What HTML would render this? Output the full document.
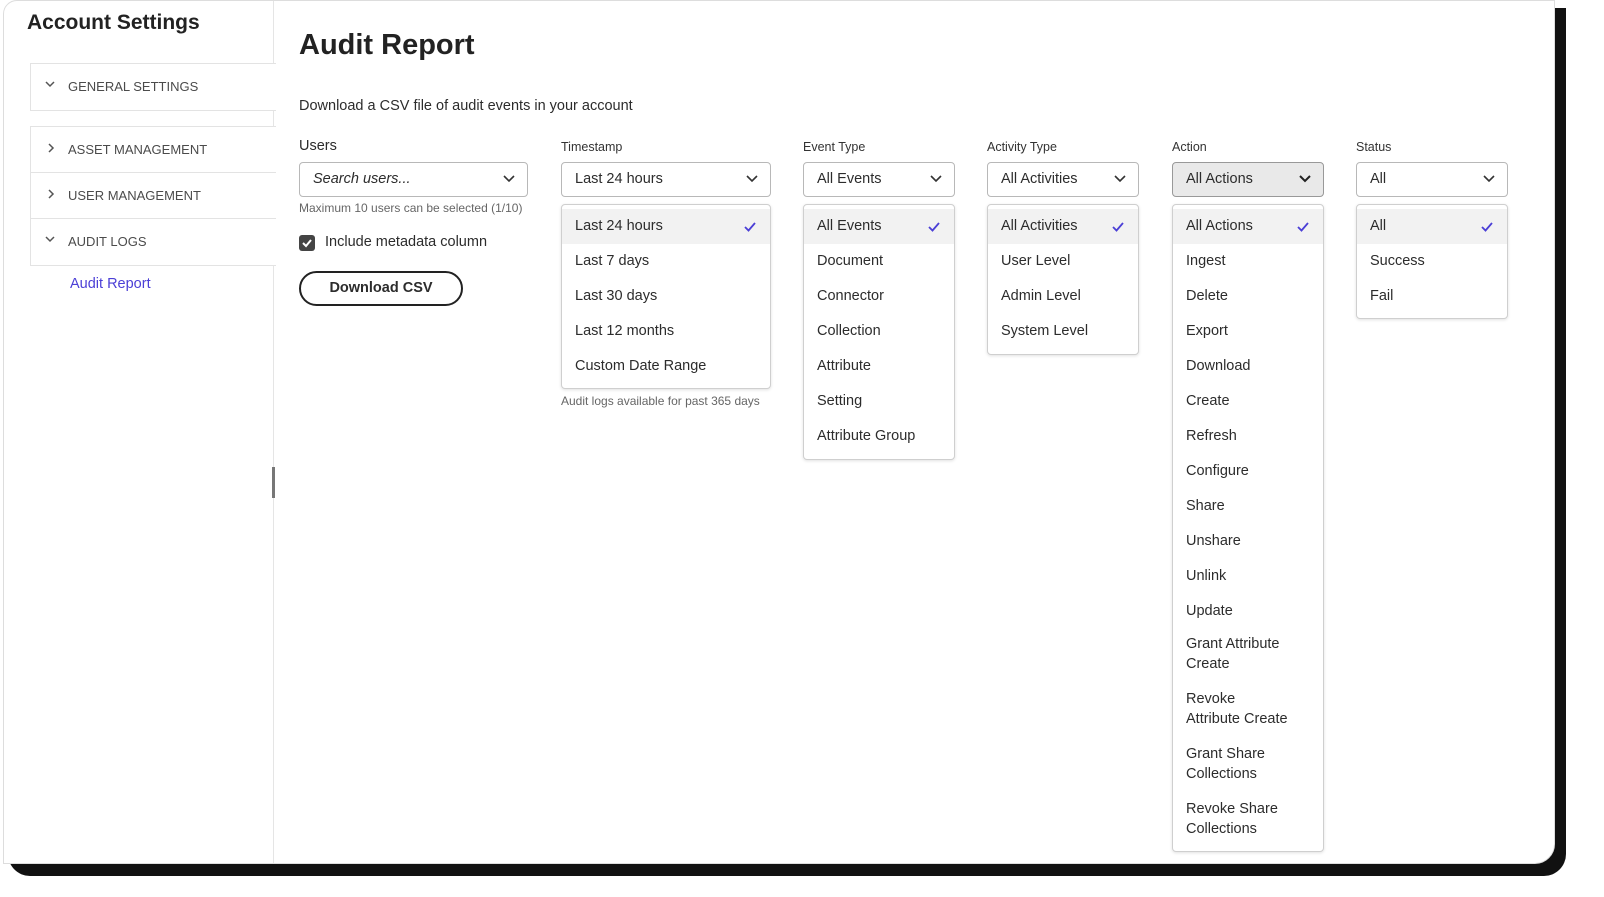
<!DOCTYPE html>
<html><head><meta charset="utf-8"><style>
*{box-sizing:border-box;margin:0;padding:0}
body{width:1604px;height:897px;background:#fff;font-family:"Liberation Sans",sans-serif;color:#2c2c2c;position:relative;overflow:hidden}
.shadow{position:absolute;left:8px;top:8px;width:1558px;height:868px;background:#111;border-radius:0 0 22px 22px}
.card{position:absolute;left:3px;top:0;width:1552px;height:864px;background:#fff;border:1px solid #ddd;border-radius:14px 0 20px 0;overflow:hidden}
.a{position:absolute}
.side{position:absolute;left:26px;width:246px;border:1px solid #e3e3e3;border-right:none;background:#fff;font-size:13px;color:#4b4b4b;text-transform:uppercase}
.side div{height:46px;line-height:46px;padding-left:37px;position:relative;border-bottom:1px solid #e3e3e3}
.side div:last-child{border-bottom:none}
.side svg{position:absolute;left:14px;top:17px}
.lbl{font-size:12.5px;color:#333}
.btn{position:absolute;top:161px;height:35px;border:1px solid #b8b8b8;border-radius:4px;font-size:14.5px;line-height:33px;padding-left:13px;background:#fff}
.btn svg{position:absolute;right:12px;top:12px}
.menu{position:absolute;top:203px;border:1px solid #cfcfcf;border-radius:4px;background:#fff;box-shadow:0 1px 3px rgba(0,0,0,.12);font-size:14.5px;padding-top:4px}
.menu div{height:35px;line-height:35px;padding-left:13px;position:relative}
.menu div.sel{background:#f2f2f2}
.menu div.two{height:55px;line-height:20px;padding-top:5px}
.menu svg.ck{position:absolute;right:14px;top:13px}
</style></head><body>
<div class="shadow"></div>
<div class="card">
<div class="a" style="left:269px;top:0;width:1px;height:864px;background:#e5e5e5"></div>
<div class="a" style="left:268px;top:466px;width:3px;height:31px;background:#777"></div>
<div class="a" style="left:23px;top:10px;font-size:21px;font-weight:bold;color:#222">Account Settings</div>
<div class="side" style="top:62px"><div><svg width="10" height="7"><path d="M1 1l4 4 4-4" stroke="#555" stroke-width="1.5" fill="none"/></svg>General Settings</div></div>
<div class="side" style="top:125px"><div><svg width="8" height="10" style="left:16px;top:16px"><path d="M2 1l4 4-4 4" stroke="#555" stroke-width="1.5" fill="none"/></svg>Asset Management</div><div><svg width="8" height="10" style="left:16px;top:16px"><path d="M2 1l4 4-4 4" stroke="#555" stroke-width="1.5" fill="none"/></svg>User Management</div><div><svg width="10" height="7"><path d="M1 1l4 4 4-4" stroke="#555" stroke-width="1.5" fill="none"/></svg>Audit Logs</div></div>
<div class="a" style="left:66px;top:275px;font-size:14.5px;color:#4b3fd6">Audit Report</div>
<div class="a" style="left:295px;top:28px;font-size:29px;font-weight:bold;color:#222">Audit Report</div>
<div class="a" style="left:295px;top:97px;font-size:14.5px">Download a CSV file of audit events in your account</div>
<div class="a" style="left:295px;top:137px;font-size:14.5px">Users</div>
<div class="btn" style="left:295px;width:229px;font-style:italic">Search users...<svg width="12" height="8"><path d="M1 1l5 5 5-5" stroke="#333" stroke-width="1.6" fill="none"/></svg></div>
<div class="a" style="left:295px;top:200px;font-size:12px;color:#666">Maximum 10 users can be selected (1/10)</div>
<div class="a" style="left:295px;top:234px;width:16px;height:16px;background:#444;border-radius:3px"><svg width="16" height="16"><path d="M4 8l3 3 5-6" stroke="#fff" stroke-width="2" fill="none"/></svg></div>
<div class="a" style="left:321px;top:233px;font-size:14.5px">Include metadata column</div>
<div class="a" style="left:295px;top:270px;width:164px;height:35px;border:2px solid #222;border-radius:18px;font-size:14.5px;font-weight:bold;text-align:center;line-height:31px">Download CSV</div>

<div class="a lbl" style="left:557px;top:139px">Timestamp</div>
<div class="a lbl" style="left:799px;top:139px">Event Type</div>
<div class="a lbl" style="left:983px;top:139px">Activity Type</div>
<div class="a lbl" style="left:1168px;top:139px">Action</div>
<div class="a lbl" style="left:1352px;top:139px">Status</div>

<div class="btn" style="left:557px;width:210px">Last 24 hours<svg width="12" height="8"><path d="M1 1l5 5 5-5" stroke="#333" stroke-width="1.6" fill="none"/></svg></div>
<div class="btn" style="left:799px;width:152px">All Events<svg width="12" height="8"><path d="M1 1l5 5 5-5" stroke="#333" stroke-width="1.6" fill="none"/></svg></div>
<div class="btn" style="left:983px;width:152px">All Activities<svg width="12" height="8"><path d="M1 1l5 5 5-5" stroke="#333" stroke-width="1.6" fill="none"/></svg></div>
<div class="btn" style="left:1168px;width:152px;background:#e9e9e9;border-color:#999">All Actions<svg width="12" height="8"><path d="M1 1l5 5 5-5" stroke="#222" stroke-width="2" fill="none"/></svg></div>
<div class="btn" style="left:1352px;width:152px">All<svg width="12" height="8"><path d="M1 1l5 5 5-5" stroke="#333" stroke-width="1.6" fill="none"/></svg></div>

<div class="menu" style="left:557px;width:210px;height:185px">
<div class="sel">Last 24 hours<svg class="ck" width="12" height="10"><path d="M1 5l3.5 3.5L11 1" stroke="#4b3fd6" stroke-width="1.8" fill="none"/></svg></div><div>Last 7 days</div><div>Last 30 days</div><div>Last 12 months</div><div>Custom Date Range</div></div>
<div class="a" style="left:557px;top:393px;font-size:12px;color:#666">Audit logs available for past 365 days</div>

<div class="menu" style="left:799px;width:152px;height:256px">
<div class="sel">All Events<svg class="ck" width="12" height="10"><path d="M1 5l3.5 3.5L11 1" stroke="#4b3fd6" stroke-width="1.8" fill="none"/></svg></div><div>Document</div><div>Connector</div><div>Collection</div><div>Attribute</div><div>Setting</div><div>Attribute Group</div></div>

<div class="menu" style="left:983px;width:152px;height:151px">
<div class="sel">All Activities<svg class="ck" width="12" height="10"><path d="M1 5l3.5 3.5L11 1" stroke="#4b3fd6" stroke-width="1.8" fill="none"/></svg></div><div>User Level</div><div>Admin Level</div><div>System Level</div></div>

<div class="menu" style="left:1168px;width:152px;height:648px">
<div class="sel">All Actions<svg class="ck" width="12" height="10"><path d="M1 5l3.5 3.5L11 1" stroke="#4b3fd6" stroke-width="1.8" fill="none"/></svg></div><div>Ingest</div><div>Delete</div><div>Export</div><div>Download</div><div>Create</div><div>Refresh</div><div>Configure</div><div>Share</div><div>Unshare</div><div>Unlink</div><div>Update</div>
<div class="two">Grant Attribute<br>Create</div><div class="two">Revoke<br>Attribute Create</div><div class="two">Grant Share<br>Collections</div><div class="two">Revoke Share<br>Collections</div></div>

<div class="menu" style="left:1352px;width:152px;height:115px">
<div class="sel">All<svg class="ck" width="12" height="10"><path d="M1 5l3.5 3.5L11 1" stroke="#4b3fd6" stroke-width="1.8" fill="none"/></svg></div><div>Success</div><div>Fail</div></div>
</div>
</body></html>
